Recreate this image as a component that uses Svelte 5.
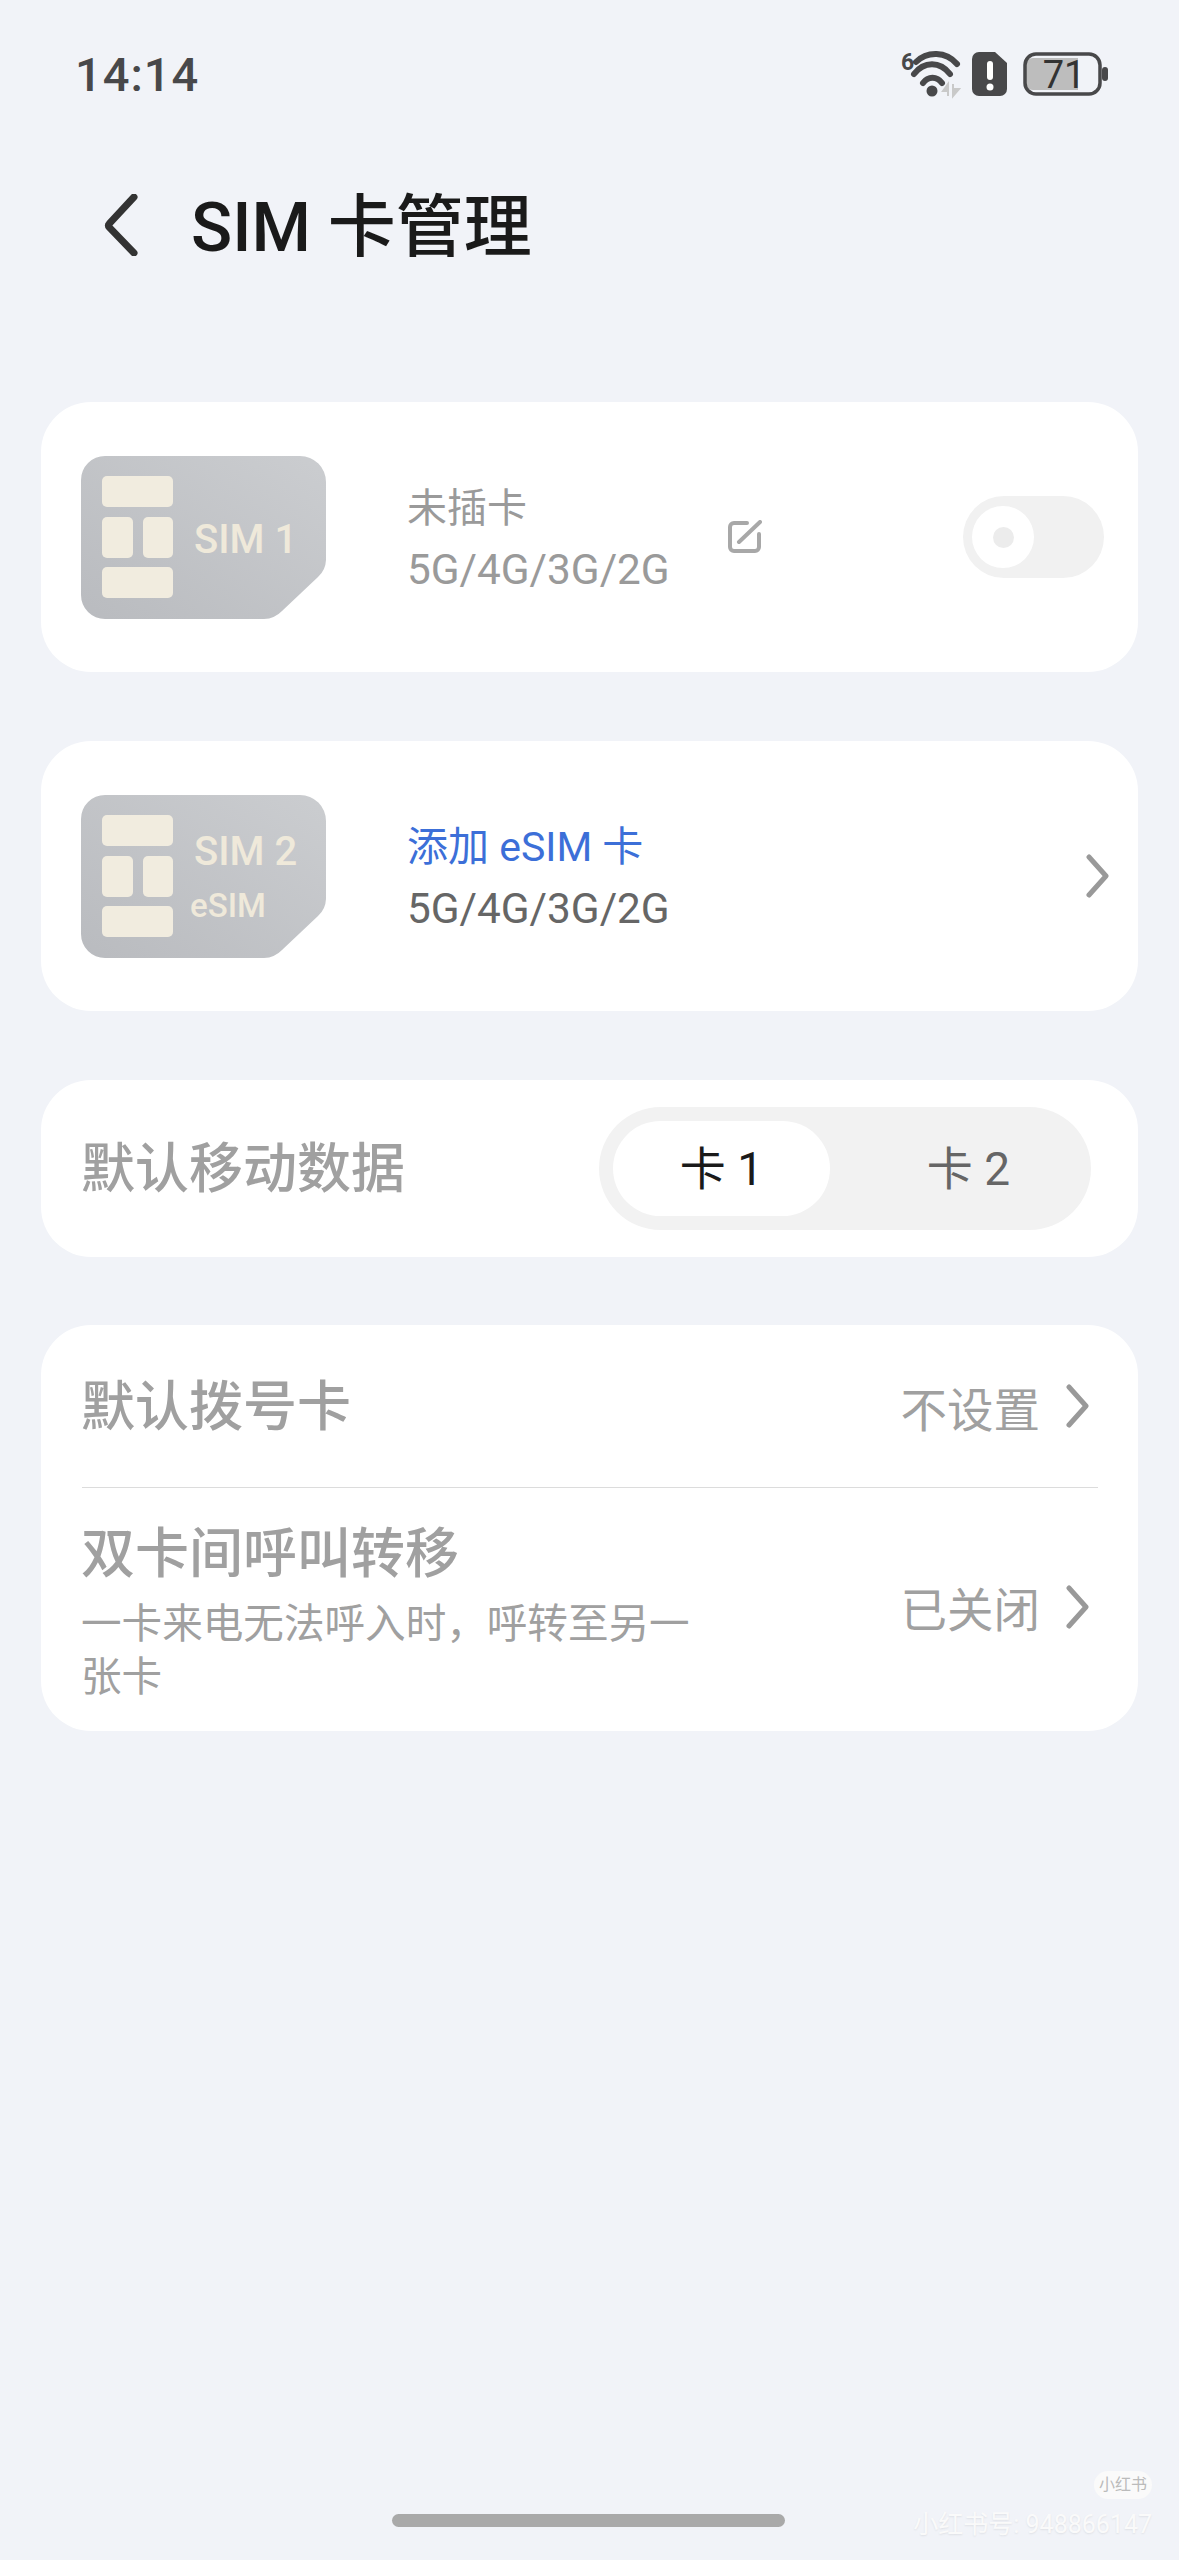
<script lang="ts">
	const chips = [
		{ x: 21, y: 20, w: 71, h: 31 },
		{ x: 21, y: 61, w: 31, h: 41 },
		{ x: 62, y: 61, w: 30, h: 41 },
		{ x: 21, y: 111, w: 71, h: 31 }
	];
</script>

{#snippet simCard(label: string, esim: boolean)}
	<svg class="sim" width="245" height="163" viewBox="0 0 245 163">
		<defs>
			<linearGradient id="sim-{label.slice(-1)}" x1="1" y1="0" x2="0" y2="1">
				<stop offset="0" stop-color="#cbcdd0" />
				<stop offset="1" stop-color="#b9bbbf" />
			</linearGradient>
		</defs>
		<path
			d="M24 0H219a26 26 0 0 1 26 26V104a24 24 0 0 1-8 17L201 155a26 26 0 0 1-18 8H24a24 24 0 0 1-24-24V24A24 24 0 0 1 24 0Z"
			fill="url(#sim-{label.slice(-1)})"
		/>
		{#each chips as c}
			<rect x={c.x} y={c.y} width={c.w} height={c.h} rx="5" fill="#f1ecdf" />
		{/each}
		{#if esim}
			<text class="sim-label" x="113" y="70">{label}</text>
			<text class="sim-sub" x="109" y="122">eSIM</text>
		{:else}
			<text class="sim-label" x="113" y="97">{label}</text>
		{/if}
	</svg>
{/snippet}

{#snippet chevron()}
	<svg class="chevron" width="24" height="44" viewBox="0 0 24 44">
		<path d="M3 3 20 22 3 41" />
	</svg>
{/snippet}

<div class="page">
	<div class="status">
		<span class="time">14:14</span>
		<svg class="status-icons" width="210" height="50" viewBox="0 0 210 50">
			<text class="wifi-six" x="1" y="20">6</text>
			<g class="wifi">
				<path d="M16 12C27 1 46 1 57 14" />
				<path d="M14 24C24 11 40 11 50 24" />
				<path d="M23 33C28 26 37 26 42 33" />
			</g>
			<circle cx="32" cy="41" r="5.5" fill="#48484a" />
			<path d="M48 46V34L43 41H47M53 34V46L59 39H54" fill="#c9c9c9" stroke="#c9c9c9" stroke-width="2" />
			<path d="M79 2H95L107 13V39a7 7 0 0 1-7 7H79a7 7 0 0 1-7-7V9a7 7 0 0 1 7-7Z" fill="#48484a" />
			<rect x="87" y="11" width="6" height="19" rx="3" fill="#fff" />
			<circle cx="90" cy="37" r="3.5" fill="#fff" />
			<path d="M133 8H178V40H133a8 8 0 0 1-8-8V16a8 8 0 0 1 8-8Z" fill="#bdbdbd" />
			<rect x="125" y="4" width="75" height="40" rx="11" fill="none" stroke="#48484a" stroke-width="3.5" />
			<rect x="202" y="17" width="6" height="14" rx="3" fill="#48484a" />
			<text class="battery-level" x="164" y="38">71</text>
		</svg>
	</div>

	<header class="header">
		<svg class="back" width="34" height="62" viewBox="0 0 34 62">
			<path d="M30 3 5 30a2 2 0 0 0 0 3L30 59" />
		</svg>
		<h1>SIM 卡管理</h1>
	</header>

	<main class="cards">
		<section class="card sim-card">
			{@render simCard('SIM 1', false)}
			<div class="sim-info">
				<div class="muted name">未插卡</div>
				<div class="muted">5G/4G/3G/2G</div>
			</div>
			<svg class="edit" width="34" height="34" viewBox="0 0 34 34">
				<path d="M19 3H6a4 4 0 0 0-4 4V27a4 4 0 0 0 4 4H27a4 4 0 0 0 4-4V14" />
				<path d="M11 22 32 2" />
			</svg>
			<div class="toggle">
				<div class="knob"><span class="dot"></span></div>
			</div>
		</section>

		<section class="card sim-card add">
			{@render simCard('SIM 2', true)}
			<div class="sim-info">
				<div class="link">添加 eSIM 卡</div>
				<div class="network">5G/4G/3G/2G</div>
			</div>
			{@render chevron()}
		</section>

		<section class="card data-card">
			<span class="row-title">默认移动数据</span>
			<div class="segment">
				<span class="tab active">卡 1</span>
				<span class="tab">卡 2</span>
			</div>
		</section>

		<section class="card list-card">
			<div class="row dial">
				<span class="row-title">默认拨号卡</span>
				<div class="value">不设置 {@render chevron()}</div>
			</div>
			<div class="divider"></div>
			<div class="row forward">
				<div class="forward-text">
					<div class="row-title">双卡间呼叫转移</div>
					<p>一卡来电无法呼入时，呼转至另一张卡</p>
				</div>
				<div class="value">已关闭 {@render chevron()}</div>
			</div>
		</section>
	</main>

	<div class="home-bar"></div>

	<div class="watermark">
		<span class="badge">小红书</span>
		<span class="account">小红书号: 948866147</span>
	</div>
</div>

<style>
	:global(body) {
		margin: 0;
		background: #f1f3f8;
	}

	.page {
		position: relative;
		height: 2560px;
		overflow: hidden;
		background: #f1f3f8;
		font-family: Roboto, 'Noto Sans CJK SC', sans-serif;
		color: #1a1a1a;
	}

	.status {
		display: flex;
		align-items: center;
		justify-content: space-between;
		height: 124px;
		padding: 26px 69px 0 75px;
		box-sizing: border-box;
	}

	.time {
		font-size: 47px;
		font-weight: 500;
		letter-spacing: 1px;
		color: #48484a;
		line-height: 50px;
	}

	.status-icons {
		display: block;
	}

	.wifi-six {
		font-size: 23px;
		font-weight: 700;
		fill: #48484a;
	}

	.wifi path {
		fill: none;
		stroke: #48484a;
		stroke-width: 6;
		stroke-linecap: round;
	}

	.battery-level {
		font-size: 38px;
		font-weight: 400;
		fill: #333;
		text-anchor: middle;
	}

	.header {
		display: flex;
		align-items: center;
		height: 100px;
		margin-top: 51px;
		padding-left: 104px;
	}

	.back path {
		fill: none;
		stroke: #333;
		stroke-width: 7;
		stroke-linecap: round;
	}

	h1 {
		margin: 6px 0 0 53px;
		font-size: 68px;
		font-weight: 500;
		line-height: 100px;
		color: #1a1a1a;
	}

	.cards {
		display: flex;
		flex-direction: column;
		gap: 69px;
		margin: 127px 41px 0;
	}

	.card {
		background: #fff;
		border-radius: 50px;
	}

	.sim-card {
		display: flex;
		align-items: center;
		height: 270px;
		padding: 0 34px 0 40px;
		box-sizing: border-box;
	}

	.sim {
		flex-shrink: 0;
	}

	.sim-label {
		font-size: 40px;
		font-weight: 500;
		fill: #efe9da;
	}

	.sim-sub {
		font-size: 33px;
		font-weight: 500;
		fill: #efe9da;
	}

	.sim-info {
		width: 301px;
		margin-left: 81px;
		padding-top: 3px;
		font-size: 42.3px;
		line-height: 61px;
	}

	.muted {
		color: #9a9a9a;
	}

	.name {
		font-size: 40px;
	}

	.link {
		color: #3c6fd8;
		font-size: 41px;
	}

	.network {
		color: #666;
	}

	.edit {
		margin-left: 20px;
	}

	.edit path {
		fill: none;
		stroke: #a8a8a8;
		stroke-width: 4;
		stroke-linecap: round;
	}

	.toggle {
		display: flex;
		align-items: center;
		width: 141px;
		height: 82px;
		margin-left: auto;
		padding-left: 9px;
		box-sizing: border-box;
		border-radius: 41px;
		background: #f1f1f1;
	}

	.knob {
		display: flex;
		align-items: center;
		justify-content: center;
		width: 62px;
		height: 62px;
		border-radius: 50%;
		background: #fff;
	}

	.dot {
		width: 21px;
		height: 21px;
		border-radius: 50%;
		background: #ececec;
	}

	.chevron {
		flex-shrink: 0;
	}

	.chevron path {
		fill: none;
		stroke: #999;
		stroke-width: 5;
		stroke-linecap: round;
		stroke-linejoin: round;
	}

	.add {
		padding-right: 28px;
		justify-content: flex-start;
	}

	.add .chevron {
		margin-left: auto;
	}

	.data-card {
		display: flex;
		align-items: center;
		justify-content: space-between;
		height: 177px;
		padding: 0 47px 0 40px;
		box-sizing: border-box;
	}

	.row-title {
		font-size: 54px;
		font-weight: 500;
		line-height: 60px;
		color: #a0a0a0;
		padding-top: 3px;
	}

	.segment {
		display: flex;
		justify-content: space-between;
		width: 492px;
		height: 123px;
		padding: 14px;
		box-sizing: border-box;
		border-radius: 62px;
		background: #f2f2f2;
	}

	.tab {
		width: 217px;
		border-radius: 48px;
		font-size: 46px;
		line-height: 97px;
		height: 95px;
		text-align: center;
		color: #666;
	}

	.tab.active {
		background: #fff;
		color: #1a1a1a;
	}

	.list-card {
		height: 406px;
		margin-top: -1px;
		padding: 0 40px 0 40px;
		box-sizing: border-box;
	}

	.row {
		display: flex;
		align-items: center;
		justify-content: space-between;
		padding-right: 8px;
	}

	.dial {
		height: 162px;
	}

	.forward {
		padding-top: 34px;
		padding-bottom: 26px;
	}

	.forward .value {
		margin-bottom: 13px;
	}

	.divider {
		margin-left: 1px;
		height: 1px;
		background: #dcdcdc;
	}

	.forward-text {
		width: 620px;
	}

	.forward-text p {
		margin: 13px 0 0;
		font-size: 40.6px;
		line-height: 53px;
		color: #a0a0a0;
	}

	.value {
		display: flex;
		align-items: center;
		gap: 26px;
		font-size: 46.5px;
		color: #a0a0a0;
	}

	.home-bar {
		position: absolute;
		left: 392px;
		bottom: 33px;
		width: 393px;
		height: 13px;
		border-radius: 7px;
		background: #a9a9a9;
	}

	.watermark {
		position: absolute;
		right: 27px;
		bottom: 22px;
		display: flex;
		flex-direction: column;
		align-items: flex-end;
		gap: 13px;
	}

	.badge {
		padding: 0 5px;
		border-radius: 14px;
		background: #fafafa;
		font-size: 16px;
		line-height: 28px;
		color: #bbb;
	}

	.account {
		font-size: 25px;
		line-height: 26px;
		color: #fafafa;
		text-shadow: 0 1px 2px rgba(0, 0, 0, 0.08);
	}
</style>
